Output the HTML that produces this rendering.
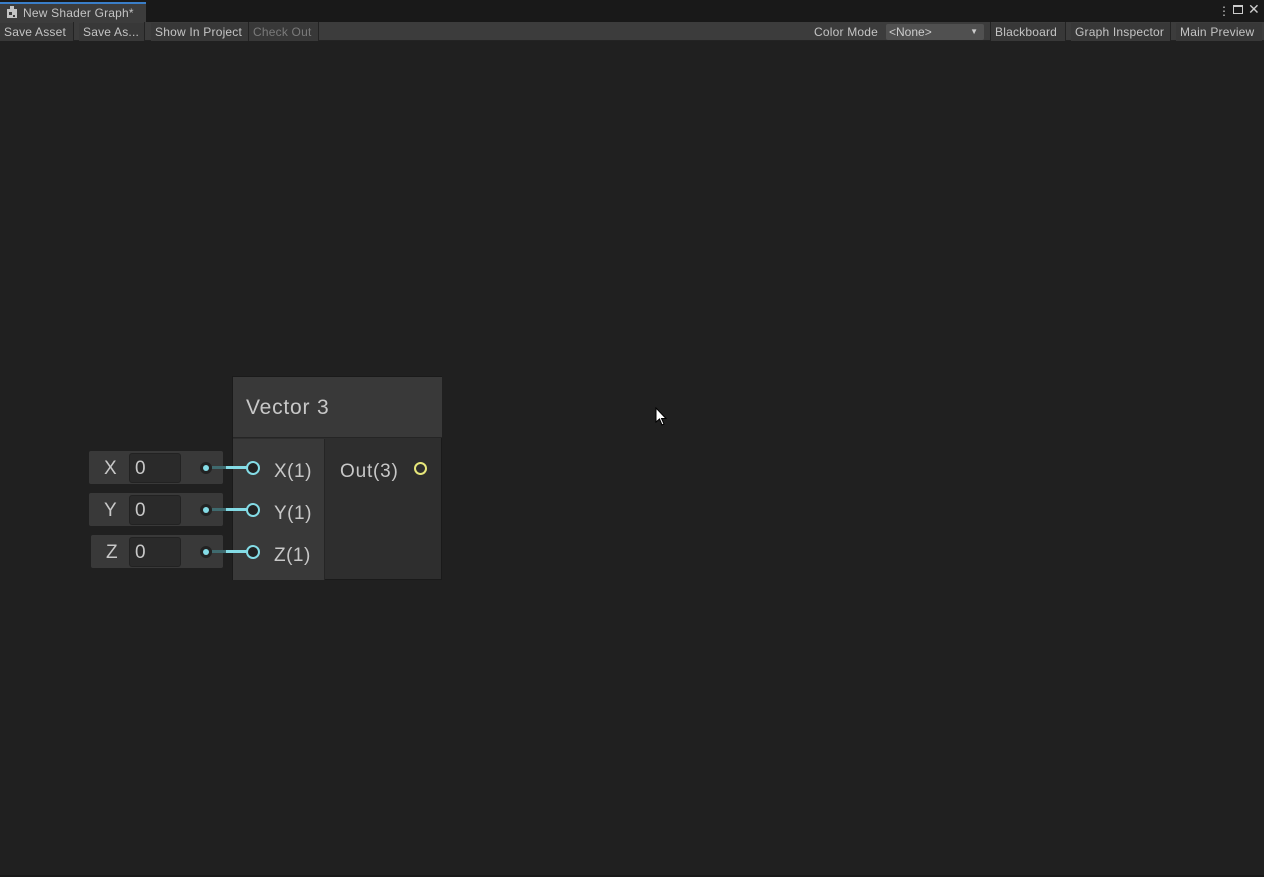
<!DOCTYPE html><html><head><style>
*{margin:0;padding:0;box-sizing:border-box}
body{width:1264px;height:877px;background:#202020;font-family:"Liberation Sans",sans-serif;position:relative;overflow:hidden;color:#c4c4c4}
.a{position:absolute}
.tb{font-size:12px;top:23px;height:19px;line-height:19px;color:#c4c4c4;padding:0 4px;background:#383838;letter-spacing:0.2px}
.sep{position:absolute;top:22px;height:19px;width:1px;background:#232323}
.lbl{font-size:19px;color:#c8c8c8;letter-spacing:0.5px}
</style></head><body>
<div class="a" style="left:0;top:0;width:1264px;height:22px;background:#191919"></div>
<div class="a" style="left:0;top:2px;width:146px;height:20px;background:#3c3c3c;border-top:2px solid #3a7ec8"></div>
<svg class="a" style="left:6px;top:6px" width="12" height="13"><rect x="1" y="3" width="10" height="9" fill="#c4c4c4"/><rect x="4" y="0" width="4" height="3" fill="#c4c4c4"/><rect x="3" y="6" width="3" height="3" fill="#3c3c3c"/><rect x="7" y="9" width="2" height="2" fill="#3c3c3c"/></svg>
<div class="a" style="left:23px;top:6px;font-size:12px;color:#c4c4c4;letter-spacing:0.2px">New Shader Graph*</div>
<div class="a" style="left:1218px;top:4px;font-size:12px;color:#ccc">⋮</div>
<div class="a" style="left:1233px;top:5px;width:10px;height:9px;border:1px solid #ccc;border-top-width:2px"></div>
<div class="a" style="left:1248px;top:1px;font-size:14px;color:#ccc">✕</div>
<div class="a" style="left:0;top:22px;width:1264px;height:19px;background:#3c3c3c;border-bottom:1px solid #232323"></div>
<div class="a tb" style="left:0;width:73px;height:18px">Save Asset</div><div class="sep" style="left:73px"></div>
<div class="a tb" style="left:79px;width:65px;height:18px">Save As...</div><div class="sep" style="left:144px"></div>
<div class="a tb" style="left:151px;width:97px;height:18px">Show In Project</div><div class="sep" style="left:248px"></div>
<div class="a tb" style="left:249px;width:69px;height:18px;color:#7a7a7a">Check Out</div><div class="sep" style="left:318px"></div>
<div class="a tb" style="left:810px;width:74px;background:none">Color Mode</div>
<div class="a" style="left:886px;top:24px;width:98px;height:16px;background:#505050;border-radius:2px;font-size:12px;line-height:16px;padding-left:3px;color:#ccc">&lt;None&gt;<span style="position:absolute;right:6px;top:0;font-size:8px">▼</span></div>
<div class="sep" style="left:990px"></div>
<div class="a tb" style="left:991px;width:74px;height:18px">Blackboard</div><div class="sep" style="left:1065px"></div>
<div class="a tb" style="left:1071px;width:99px;height:18px">Graph Inspector</div><div class="sep" style="left:1170px"></div>
<div class="a tb" style="left:1176px;width:86px;height:18px">Main Preview</div>
<div class="a" style="left:232px;top:376px;width:210px;height:204px;background:#2e2e2e;border:1px solid #1a1a1a"></div>
<div class="a" style="left:233px;top:377px;width:209px;height:61px;background:#393939;border-bottom:1px solid #252525"></div>
<div class="a" style="left:233px;top:439px;width:92px;height:141px;background:#393939;border-right:1px solid #252525"></div>
<div class="a lbl" style="left:246px;top:396px;font-size:21px;letter-spacing:0.8px">Vector 3</div>
<div class="a lbl" style="left:274px;top:461px">X(1)</div>
<div class="a lbl" style="left:274px;top:503px">Y(1)</div>
<div class="a lbl" style="left:274px;top:545px">Z(1)</div>
<div class="a lbl" style="left:340px;top:461px;letter-spacing:0.8px">Out(3)</div>
<div class="a" style="left:414px;top:462px;width:13px;height:13px;border:2px solid #e6e67a;border-radius:50%"></div>
<div class="a" style="left:89px;top:451px;width:134px;height:33px;background:#393939;border-radius:2px"></div>
<div class="a" style="left:89px;top:493px;width:134px;height:33px;background:#393939;border-radius:2px"></div>
<div class="a" style="left:91px;top:535px;width:132px;height:33px;background:#393939;border-radius:2px"></div>
<div class="a lbl" style="left:104px;top:458px">X</div>
<div class="a lbl" style="left:104px;top:500px">Y</div>
<div class="a lbl" style="left:106px;top:542px">Z</div>
<div class="a" style="left:129px;top:453px;width:52px;height:30px;background:#2a2a2a;border-radius:3px;border:1px solid #222"><span class="lbl" style="position:absolute;left:5px;top:4px">0</span></div>
<div class="a" style="left:129px;top:495px;width:52px;height:30px;background:#2a2a2a;border-radius:3px;border:1px solid #222"><span class="lbl" style="position:absolute;left:5px;top:4px">0</span></div>
<div class="a" style="left:129px;top:537px;width:52px;height:30px;background:#2a2a2a;border-radius:3px;border:1px solid #222"><span class="lbl" style="position:absolute;left:5px;top:4px">0</span></div>
<svg class="a" style="left:195px;top:455px" width="70" height="110">
<g>
<circle cx="11" cy="13" r="6" fill="#222"/><circle cx="11" cy="13" r="3" fill="#84dce6"/><rect x="17" y="11" width="14" height="3" fill="#3f6a6e"/><rect x="31" y="11" width="22" height="3" fill="#84dce6"/><circle cx="58" cy="13" r="6" fill="#222" stroke="#84dce6" stroke-width="2"/>
</g>
<g transform="translate(0,42)">
<circle cx="11" cy="13" r="6" fill="#222"/><circle cx="11" cy="13" r="3" fill="#84dce6"/><rect x="17" y="11" width="14" height="3" fill="#3f6a6e"/><rect x="31" y="11" width="22" height="3" fill="#84dce6"/><circle cx="58" cy="13" r="6" fill="#222" stroke="#84dce6" stroke-width="2"/>
</g>
<g transform="translate(0,84)">
<circle cx="11" cy="13" r="6" fill="#222"/><circle cx="11" cy="13" r="3" fill="#84dce6"/><rect x="17" y="11" width="14" height="3" fill="#3f6a6e"/><rect x="31" y="11" width="22" height="3" fill="#84dce6"/><circle cx="58" cy="13" r="6" fill="#222" stroke="#84dce6" stroke-width="2"/>
</g>
</svg>
<svg class="a" style="left:655px;top:407px" width="13" height="20"><path d="M1 1 L1 15 L4.5 12 L7 18 L9 17 L6.5 11.5 L11 11.5 Z" fill="#fff" stroke="#000" stroke-width="1"/></svg>
<div class="a" style="left:0;top:875px;width:1264px;height:2px;background:#191919"></div>
</body></html>
